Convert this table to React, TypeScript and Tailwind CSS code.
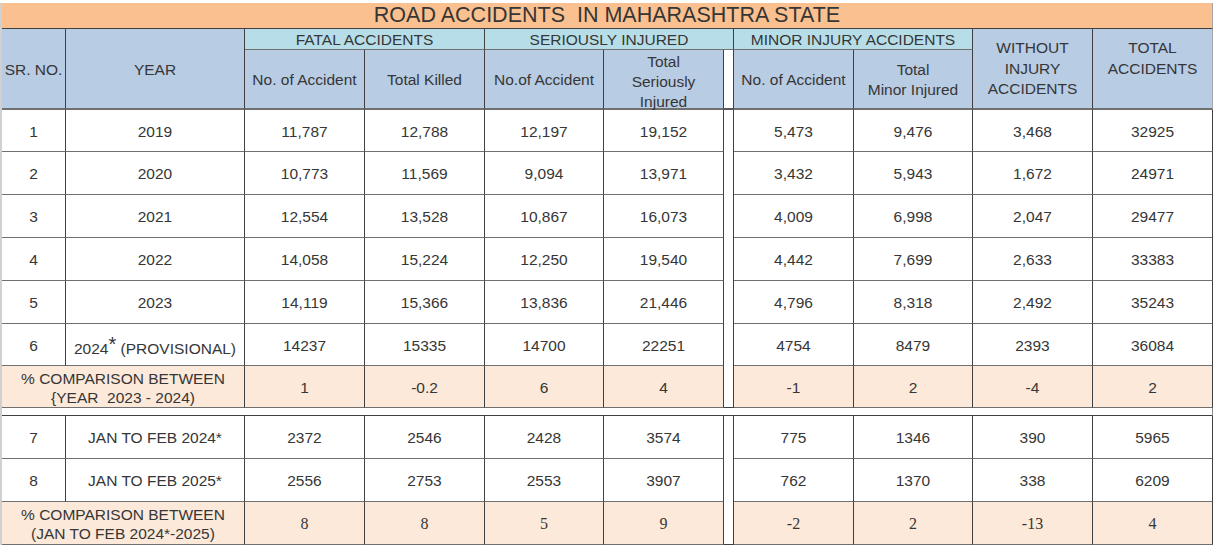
import React from "react";

/* ---------------- Data ---------------- */

const yearRows: string[][] = [
  ["1", "2019", "11,787", "12,788", "12,197", "19,152", "5,473", "9,476", "3,468", "32925"],
  ["2", "2020", "10,773", "11,569", "9,094", "13,971", "3,432", "5,943", "1,672", "24971"],
  ["3", "2021", "12,554", "13,528", "10,867", "16,073", "4,009", "6,998", "2,047", "29477"],
  ["4", "2022", "14,058", "15,224", "12,250", "19,540", "4,442", "7,699", "2,633", "33383"],
  ["5", "2023", "14,119", "15,366", "13,836", "21,446", "4,796", "8,318", "2,492", "35243"],
  ["6", "2024", "14237", "15335", "14700", "22251", "4754", "8479", "2393", "36084"],
];

const yearComparison = ["1", "-0.2", "6", "4", "-1", "2", "-4", "2"];

const monthRows: string[][] = [
  ["7", "JAN TO FEB 2024*", "2372", "2546", "2428", "3574", "775", "1346", "390", "5965"],
  ["8", "JAN TO FEB 2025*", "2556", "2753", "2553", "3907", "762", "1370", "338", "6209"],
];

const monthComparison = ["8", "8", "5", "9", "-2", "2", "-13", "4"];

/* ---------------- Cells ---------------- */

function Cell({ children, className = "" }: { children?: React.ReactNode; className?: string }) {
  return (
    <div
      className={`flex items-center justify-center text-center pt-[2px] border-r border-b border-r-[#404040] border-b-[#707070] ${className}`}
    >
      {children}
    </div>
  );
}

function Gap({ className = "" }: { className?: string }) {
  return <div className={`bg-white border-r border-r-[#404040] ${className}`} />;
}

function DataRow({ row, year }: { row: string[]; year?: React.ReactNode }) {
  const [sr, label, ...vals] = row;
  return (
    <>
      <Cell className="bg-white">{sr}</Cell>
      <Cell className="bg-white">{year ?? label}</Cell>
      {vals.slice(0, 4).map((v, i) => (
        <Cell key={"a" + i} className="bg-white">
          {v}
        </Cell>
      ))}
      <Gap />
      {vals.slice(4).map((v, i) => (
        <Cell key={"b" + i} className={i === 3 ? "bg-white border-r-[#8c8c8c]" : "bg-white"}>
          {v}
        </Cell>
      ))}
    </>
  );
}

function ComparisonRow({ label, values, serif }: { label: React.ReactNode; values: string[]; serif?: boolean }) {
  const valueFont = serif ? "font-['Liberation_Serif',serif] text-[16px]" : "";
  return (
    <>
      <Cell className="col-span-2 bg-[#fde9d9] leading-[19px] border-b-[#404040]">{label}</Cell>
      {values.slice(0, 4).map((v, i) => (
        <Cell key={"a" + i} className={`bg-[#fde9d9] border-b-[#404040] ${valueFont}`}>
          {v}
        </Cell>
      ))}
      <Gap className="border-b border-b-[#404040]" />
      {values.slice(4).map((v, i) => (
        <Cell
          key={"b" + i}
          className={`bg-[#fde9d9] border-b-[#404040] ${valueFont} ${i === 3 ? "border-r-[#8c8c8c]" : ""}`}
        >
          {v}
        </Cell>
      ))}
    </>
  );
}

/* ---------------- Page ---------------- */

export default function App() {
  return (
    <div className="w-[1217px] h-[547px] bg-white pt-[3px] text-[15.5px] text-[#363636] font-['Liberation_Sans',Arial,sans-serif] overflow-hidden">
      <div className="border-l-2 border-l-[#d0d0d0] w-[1213px]">
        <div className="grid grid-cols-[64px_179px_120px_120px_119px_120px_10px_120px_119px_120px_120px] grid-rows-[26px_21px_60px_42px_43px_43px_43px_43px_42px_42px_8px_43px_43px_43px]">
          {/* ---------- Title ---------- */}
          <div className="col-span-11 flex items-center justify-center bg-[#fac08f] border-b border-r border-b-[#404040] border-r-[#a6a6a6] text-[21.5px] whitespace-pre leading-none">
            ROAD ACCIDENTS  IN MAHARASHTRA STATE
          </div>

          {/* ---------- Header ---------- */}
          <Cell className="row-span-2 bg-[#b8cce4] border-b-2 border-b-[#595959]">SR. NO.</Cell>
          <Cell className="row-span-2 bg-[#b8cce4] border-b-2 border-b-[#595959]">YEAR</Cell>
          <Cell className="col-span-2 bg-[#b7dee8] border-b-[#404040]">FATAL ACCIDENTS</Cell>
          <Cell className="col-span-3 bg-[#b7dee8] border-b-[#404040]">SERIOUSLY INJURED</Cell>
          <Cell className="col-span-2 bg-[#b7dee8] border-b-[#404040]">MINOR INJURY ACCIDENTS</Cell>
          <Cell className="row-span-2 bg-[#b8cce4] border-b-2 border-b-[#595959] items-start pt-[9px] leading-[20.5px]">
            WITHOUT
            <br />
            INJURY
            <br />
            ACCIDENTS
          </Cell>
          <Cell className="row-span-2 bg-[#b8cce4] border-b-2 border-b-[#595959] border-r-[#a6a6a6] items-start pt-[9px] leading-[20.5px]">
            TOTAL
            <br />
            ACCIDENTS
          </Cell>

          <Cell className="bg-[#b8cce4] border-b-2 border-b-[#595959]">No. of Accident</Cell>
          <Cell className="bg-[#b8cce4] border-b-2 border-b-[#595959]">Total Killed</Cell>
          <Cell className="bg-[#b8cce4] border-b-2 border-b-[#595959]">No.of Accident</Cell>
          <Cell className="bg-[#b8cce4] border-b-2 border-b-[#595959] items-start leading-[20px] pt-[1px]">
            Total
            <br />
            Seriously
            <br />
            Injured
          </Cell>
          <Gap className="border-b-2 border-b-[#595959]" />
          <Cell className="bg-[#b8cce4] border-b-2 border-b-[#595959]">No. of Accident</Cell>
          <Cell className="bg-[#b8cce4] border-b-2 border-b-[#595959] leading-[20px]">
            Total
            <br />
            Minor Injured
          </Cell>

          {/* ---------- Year rows ---------- */}
          {yearRows.map((row) => (
            <DataRow
              key={row[0]}
              row={row}
              year={
                row[0] === "6" ? (
                  <span className="pt-[3px]">
                    2024<span className="text-[20px] leading-none align-[3px]">*</span> (PROVISIONAL)
                  </span>
                ) : undefined
              }
            />
          ))}

          <ComparisonRow
            label={
              <span className="whitespace-pre">
                % COMPARISON BETWEEN
                <br />
                {"{YEAR  2023 - 2024)"}
              </span>
            }
            values={yearComparison}
          />

          {/* ---------- Separator ---------- */}
          <div className="col-span-11 bg-white border-b border-b-[#404040] border-r border-r-[#8c8c8c]" />

          {/* ---------- Jan to Feb ---------- */}
          {monthRows.map((row) => (
            <DataRow key={row[0]} row={row} />
          ))}

          <ComparisonRow
            label={
              <span>
                % COMPARISON BETWEEN
                <br />
                (JAN TO FEB 2024*-2025)
              </span>
            }
            values={monthComparison}
            serif
          />
        </div>
      </div>
    </div>
  );
}
